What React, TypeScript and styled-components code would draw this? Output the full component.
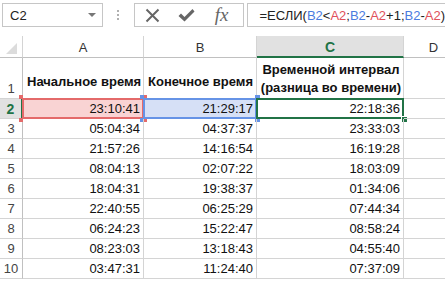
import React from "react";
import styled, { createGlobalStyle, css } from "styled-components";

const Global = createGlobalStyle`
  html, body { margin: 0; padding: 0; background: #ffffff; }
  body { font-family: "Liberation Sans", Arial, sans-serif; overflow: hidden; }
`;

const Page = styled.div`
  width: 445px;
  height: 281px;
  overflow: hidden;
  background: #fff;
`;

const FormulaBar = styled.div`
  display: flex;
  align-items: stretch;
  height: 24px;
  padding: 3px 0 0 2px;
  margin-bottom: 9px;
`;

const NameBox = styled.div`
  box-sizing: border-box;
  width: 101px;
  border: 1px solid #c6c6c6;
  display: flex;
  align-items: center;
  justify-content: space-between;
  padding: 0 6px 0 7px;
  font-size: 13px;
  color: #222;
`;

const DropArrow = styled.span`
  width: 0;
  height: 0;
  border-left: 4px solid transparent;
  border-right: 4px solid transparent;
  border-top: 4px solid #777;
`;

const Grip = styled.div`
  width: 31px;
  display: flex;
  flex-direction: column;
  align-items: center;
  justify-content: center;
  gap: 2px;
  span { width: 2px; height: 2px; background: #b0b0b0; }
`;

const Buttons = styled.div`
  box-sizing: border-box;
  width: 111px;
  border: 1px solid #c6c6c6;
  display: flex;
  align-items: center;
  padding: 0 0 0 10px;
  gap: 18px;
`;

const Fx = styled.span`
  font-family: "Liberation Serif", "Times New Roman", serif;
  font-style: italic;
  font-size: 19px;
  color: #666;
  margin-left: 2px;
`;

const FormulaInput = styled.div`
  flex: 1;
  margin-left: 3px;
  border: 1px solid #c6c6c6;
  border-right: none;
  display: flex;
  align-items: center;
  padding-left: 11px;
  font-size: 13px;
  white-space: nowrap;
  color: #222;
`;

const Ref = styled.span<{ $c: "blue" | "red" }>`
  color: ${(p) => (p.$c === "blue" ? "#4a7be0" : "#e0505a")};
`;

const Grid = styled.div`
  display: grid;
  grid-template-columns: 23px 121px 113px 147px 60px;
  grid-template-rows: 22px 41px repeat(9, 20px);
`;

type Sel = "red" | "blue" | "green" | undefined;

const selColors: Record<string, { line: string; fill: string }> = {
  red: { line: "#e46a6a", fill: "#f9d3d3" },
  blue: { line: "#6693e6", fill: "#d6e0f6" },
  green: { line: "#217346", fill: "transparent" },
};

const Corner = styled.div`
  box-sizing: border-box;
  border-right: 1px solid #d4d4d4;
  border-bottom: 1px solid #c0c0c0;
  position: relative;
  &::after {
    content: "";
    position: absolute;
    right: 5px;
    bottom: 3px;
    width: 0;
    height: 0;
    border-left: 11px solid transparent;
    border-bottom: 11px solid #dcdcdc;
  }
`;

const ColHead = styled.div<{ $active?: boolean }>`
  box-sizing: border-box;
  border-right: 1px solid #d4d4d4;
  border-bottom: 1px solid #c0c0c0;
  display: flex;
  align-items: center;
  justify-content: center;
  font-size: 13px;
  color: #333;
  padding-top: 1px;
  ${(p) =>
    p.$active &&
    css`
      background: #e1e1e1;
      border-bottom: 2px solid #217346;
      color: #217346;
      font-weight: bold;
      font-size: 14px;
    `}
`;

const RowHead = styled.div<{ $active?: boolean; $tall?: boolean }>`
  box-sizing: border-box;
  border-right: 1px solid #c0c0c0;
  border-bottom: 1px solid #d4d4d4;
  display: flex;
  align-items: ${(p) => (p.$tall ? "flex-end" : "center")};
  justify-content: center;
  padding-bottom: ${(p) => (p.$tall ? "2px" : "0")};
  font-size: 13px;
  color: #444;
  ${(p) =>
    p.$active &&
    css`
      background: #e1e1e1;
      border-right: 2px solid #217346;
      color: #217346;
      font-weight: bold;
      font-size: 14px;
    `}
`;

const Cell = styled.div<{ $sel?: Sel; $head?: boolean; $wrap?: boolean }>`
  box-sizing: border-box;
  position: relative;
  border-right: 1px solid #d4d4d4;
  border-bottom: 1px solid #d4d4d4;
  display: flex;
  align-items: ${(p) => (p.$head ? "flex-end" : "center")};
  justify-content: ${(p) => (p.$head ? (p.$wrap ? "center" : "flex-start") : "flex-end")};
  text-align: center;
  padding: ${(p) => (p.$head ? (p.$wrap ? "0 2px 1px 4px" : "0 2px 8px 4px") : "0 3px 0 0")};
  font-size: 13px;
  font-weight: ${(p) => (p.$head ? "bold" : "normal")};
  line-height: ${(p) => (p.$wrap ? "18px" : "16px")};
  color: #111;
  white-space: nowrap;
  background: ${(p) => (p.$sel ? selColors[p.$sel].fill : "transparent")};
`;

const SelFrame = styled.span<{ $sel: "red" | "blue" | "green" }>`
  position: absolute;
  left: -1px;
  top: -1px;
  right: -1px;
  bottom: -1px;
  border: 2px solid ${(p) => selColors[p.$sel].line};
  pointer-events: none;
`;

const Handle = styled.span<{ $color: string; $pos: "tl" | "tr" | "bl" | "br"; $size?: number }>`
  position: absolute;
  width: ${(p) => p.$size ?? 5}px;
  height: ${(p) => p.$size ?? 5}px;
  background: ${(p) => p.$color};
  ${(p) => {
    const o = -Math.ceil(((p.$size ?? 5) + 1) / 2) - 1;
    return css`
      ${p.$pos[0] === "t" ? "top" : "bottom"}: ${o}px;
      ${p.$pos[1] === "l" ? "left" : "right"}: ${o}px;
    `;
  }}
`;

const FillHandle = styled.span`
  position: absolute;
  right: -5px;
  bottom: -5px;
  width: 5px;
  height: 5px;
  background: #217346;
  border: 1px solid #fff;
`;

const rows: [string, string, string][] = [
  ["23:10:41", "21:29:17", "22:18:36"],
  ["05:04:34", "04:37:37", "23:33:03"],
  ["21:57:26", "14:16:54", "16:19:28"],
  ["08:04:13", "02:07:22", "18:03:09"],
  ["18:04:31", "19:38:37", "01:34:06"],
  ["22:40:55", "06:25:29", "07:44:34"],
  ["06:24:23", "15:22:47", "08:58:24"],
  ["08:23:03", "13:18:43", "04:55:40"],
  ["03:47:31", "11:24:40", "07:37:09"],
];

function RangeFrame({ sel }: { sel: "red" | "blue" }) {
  const c = selColors[sel].line;
  return (
    <>
      <SelFrame $sel={sel} />
      <Handle $color={c} $pos="tl" $size={4} />
      <Handle $color={c} $pos="tr" $size={5} />
      <Handle $color={c} $pos="bl" $size={4} />
      <Handle $color={c} $pos="br" $size={5} />
    </>
  );
}

export default function App() {
  return (
    <Page>
      <Global />
      <FormulaBar>
        <NameBox>
          C2
          <DropArrow />
        </NameBox>
        <Grip>
          <span />
          <span />
          <span />
        </Grip>
        <Buttons>
          <svg width="15" height="15" viewBox="0 0 15 15">
            <path d="M1.5 1.5 L13.5 13.5 M13.5 1.5 L1.5 13.5" stroke="#666" strokeWidth="2" fill="none" />
          </svg>
          <svg width="17" height="15" viewBox="0 0 17 15">
            <path d="M0.5 8 L3 5.5 L6.5 9 L14.5 1 L16.5 3.5 L6.5 13.5 Z" fill="#666" />
          </svg>
          <Fx>fx</Fx>
        </Buttons>
        <FormulaInput>
          =ЕСЛИ(<Ref $c="blue">B2</Ref>&lt;<Ref $c="red">A2</Ref>;<Ref $c="blue">B2</Ref>-
          <Ref $c="red">A2</Ref>+1;<Ref $c="blue">B2</Ref>-<Ref $c="red">A2</Ref>)
        </FormulaInput>
      </FormulaBar>
      <Grid>
        <Corner />
        <ColHead>A</ColHead>
        <ColHead>B</ColHead>
        <ColHead $active>C</ColHead>
        <ColHead>D</ColHead>

        <RowHead $tall>1</RowHead>
        <Cell $head>Начальное время</Cell>
        <Cell $head>Конечное время</Cell>
        <Cell $head $wrap>
          Временной интервал
          <br />
          (разница во времени)
        </Cell>
        <Cell $head />

        {rows.map((r, i) => (
          <React.Fragment key={i}>
            <RowHead $active={i === 0}>{i + 2}</RowHead>
            <Cell $sel={i === 0 ? "red" : undefined}>
              {r[0]}
              {i === 0 && <RangeFrame sel="red" />}
            </Cell>
            <Cell $sel={i === 0 ? "blue" : undefined}>
              {r[1]}
              {i === 0 && <RangeFrame sel="blue" />}
            </Cell>
            <Cell>
              {r[2]}
              {i === 0 && (
                <>
                  <SelFrame $sel="green" />
                  <FillHandle />
                </>
              )}
            </Cell>
            <Cell />
          </React.Fragment>
        ))}
      </Grid>
    </Page>
  );
}
